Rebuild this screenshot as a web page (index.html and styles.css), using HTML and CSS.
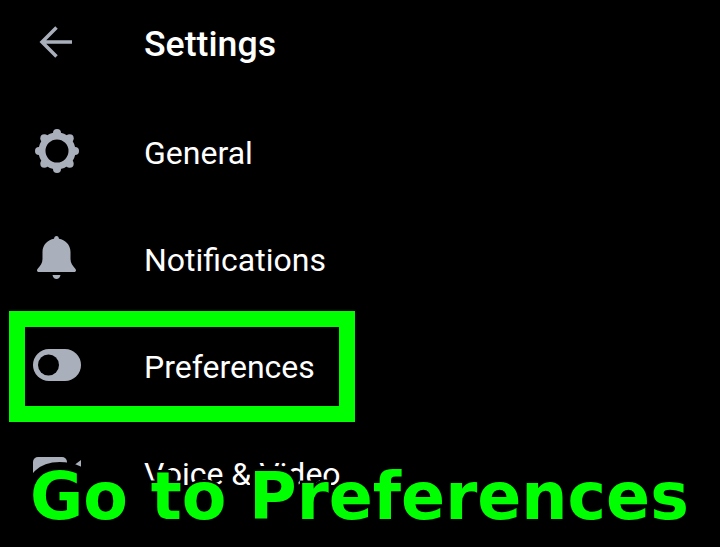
FILE: index.html
```html
<!DOCTYPE html>
<html>
<head>
    <title>Settings</title>
    <link rel="stylesheet" href="styles.css">
</head>
<body>
    <div class="header">
        <div class="icon">
            <svg width="48" height="48" viewBox="0 0 48 48">
                <path class="arrow" d="M39 23H9M23.500 8.500L9 23L23.500 37.500"/>
            </svg>
        </div>
        <h1 class="title">Settings</h1>
    </div>

    <div class="row">
        <div class="icon">
            <svg width="48" height="48" viewBox="0 0 48 48">
                <circle class="gear-ring" cx="24" cy="24" r="15"/>
                <circle class="fill" cx="24" cy="6" r="4"/>
                <circle class="fill" cx="24" cy="42" r="4"/>
                <circle class="fill" cx="6" cy="24" r="4"/>
                <circle class="fill" cx="42" cy="24" r="4"/>
                <circle class="fill" cx="11.300" cy="11.300" r="4"/>
                <circle class="fill" cx="36.700" cy="11.300" r="4"/>
                <circle class="fill" cx="11.300" cy="36.700" r="4"/>
                <circle class="fill" cx="36.700" cy="36.700" r="4"/>
            </svg>
        </div>
        <span class="label">General</span>
    </div>

    <div class="row">
        <div class="icon">
            <svg width="48" height="48" viewBox="0 0 48 48">
                <path class="fill" d="M23.500 2C25 2 25.800 3.200 26 4.800C32 6 37.500 10.500 37.500 18V25C37.500 29 39.500 31.500 42.500 35C43.500 36.500 43 38 41 38H6C4 38 3.500 36.500 4.500 35C7.500 31.500 9.500 29 9.500 25V18C9.500 10.500 15 6 21 4.800C21.200 3.200 22 2 23.500 2Z"/>
                <path class="fill" d="M19.500 41H27.500C27 43.700 25.500 45 23.500 45C21.500 45 20 43.700 19.500 41Z"/>
            </svg>
        </div>
        <span class="label">Notifications</span>
    </div>

    <div class="row">
        <div class="icon">
            <svg width="48" height="48" viewBox="0 0 48 48">
                <rect class="fill" x="0" y="8" width="48" height="32" rx="16"/>
                <circle cx="15.500" cy="24" r="10.500" fill="#000"/>
            </svg>
        </div>
        <span class="label">Preferences</span>
    </div>

    <div class="row">
        <div class="icon">
            <svg width="48" height="48" viewBox="0 0 48 48">
                <rect class="fill" x="0" y="9" width="34" height="32" rx="5"/>
                <path class="fill" d="M36 21L48 12V38L36 29Z"/>
            </svg>
        </div>
        <span class="label">Voice &amp; Video</span>
    </div>

    <div class="highlight"></div>
    <div class="caption"><span class="cap-g">G</span>o to <span class="cap-p">P</span>references</div>
</body>
</html>
```

FILE: styles.css
```css
html, body {
    margin: 0;
    height: 100%;
    overflow: hidden;
    background-color: #000;
}

body {
    position: relative;
    font-family: Roboto, "Liberation Sans", sans-serif;
    color: #fff;
}

.header {
    display: flex;
    align-items: center;
    height: 86px;
    margin-bottom: 13px;
    padding-left: 33px;
}

.row {
    display: flex;
    align-items: center;
    height: 107px;
    padding-left: 33px;
}

.icon {
    width: 48px;
    height: 48px;
    margin-right: 63px;
}

.row .icon {
    align-self: flex-start;
    margin-top: 28px;
}

.icon svg {
    display: block;
}

.fill {
    fill: #a9b0bb;
}

.arrow {
    fill: none;
    stroke: #a9b0bb;
    stroke-width: 3.500;
}

.gear-ring {
    fill: none;
    stroke: #a9b0bb;
    stroke-width: 7;
}

.title {
    margin: 2px 0 0;
    font-size: 35.700px;
    font-weight: 500;
}

.label {
    font-size: 32px;
}

.highlight {
    position: absolute;
    left: 9px;
    top: 311px;
    width: 314px;
    height: 79px;
    border: 16px solid #00ff00;
}

.caption {
    position: absolute;
    left: 30px;
    top: 459px;
    font-family: "DejaVu Sans", sans-serif;
    font-size: 65px;
    font-weight: 700;
    line-height: 76px;
    white-space: nowrap;
    color: #00ff00;
    -webkit-text-stroke: 5px #000;
    paint-order: stroke fill;
}

.cap-g {
    -webkit-text-stroke: 16px #000;
}

.cap-p {
    -webkit-text-stroke: 10px #000;
}
```
